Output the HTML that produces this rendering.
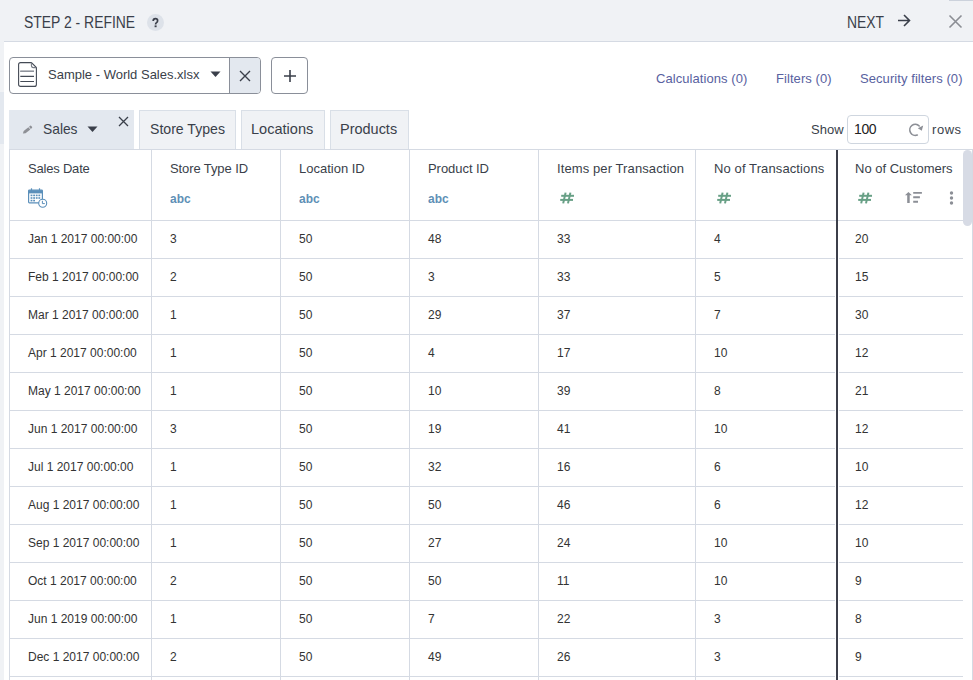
<!DOCTYPE html>
<html><head><meta charset="utf-8">
<style>
*{box-sizing:border-box;margin:0;padding:0}
html,body{width:973px;height:680px;overflow:hidden;background:#f0f2f5;font-family:"Liberation Sans",sans-serif;color:#333}
.abs{position:absolute;white-space:nowrap}
svg.abs{overflow:visible}
#hdr-title{left:24px;top:14px;font-size:16px;color:#3a3f4a;transform:scaleX(0.87);transform-origin:0 0}
#qm{left:147px;top:14px;width:17px;height:17px;border-radius:50%;background:#dde2e9}
#next{left:847px;top:14px;font-size:16px;color:#3a3f4a;transform:scaleX(0.87);transform-origin:0 0}
#panel{left:4px;top:41px;width:969px;height:639px;background:#fff;border-top:1px solid #d5dae3}
#dd{left:9px;top:57px;width:252px;height:37px;border:1px solid #8a8f99;border-radius:4px;overflow:hidden}
#dd .x{position:absolute;left:219px;top:0;width:32px;height:35px;background:#e3e8ef;border-left:1px solid #8a8f99}
#plus{left:271px;top:57px;width:37px;height:37px;border:1px solid #8a8f99;border-radius:4px}
.link{top:71px;font-size:13px;color:#5861a0;letter-spacing:0.07px}
.tab{top:110px;height:39px;background:#f0f2f5;border:1px solid #d9dfe7;border-bottom:none;font-size:15px;color:#3a3f4a;line-height:38px;letter-spacing:-0.3px}
.hd{top:161px;font-size:13px;color:#3a3f4a}
.abc{top:191px;font-size:13px;font-weight:bold;color:#5e90b6;transform:scaleX(0.92);transform-origin:0 0}
.cell{font-size:12px;color:#333;line-height:37px}
</style></head><body>
<div id="hdr-title" class="abs">STEP 2 - REFINE</div>
<div id="qm" class="abs"></div>
<svg class="abs" style="left:147px;top:14px" width="17" height="17" viewBox="0 0 17 17"><path d="M6.2 7.1Q6.2 4.7 8.4 4.7Q10.6 4.7 10.6 6.7Q10.6 7.8 9.5 8.6Q8.6 9.2 8.6 10.5" fill="none" stroke="#3a3f4a" stroke-width="1.7"/><rect x="7.6" y="11.4" width="2" height="1.8" fill="#3a3f4a"/></svg>
<div id="next" class="abs">NEXT</div>
<svg class="abs" style="left:897px;top:14px" width="14" height="13" viewBox="0 0 14 13"><path d="M1 6.5H12.5M7 1L12.5 6.5L7 12" fill="none" stroke="#3a3f4a" stroke-width="1.6"/></svg>
<svg class="abs" style="left:948px;top:14px" width="15" height="15" viewBox="0 0 15 15"><path d="M1.5 1.5L13.5 13.5M13.5 1.5L1.5 13.5" fill="none" stroke="#8b8e94" stroke-width="1.6"/></svg>
<div class="abs" style="left:949px;top:0;width:24px;height:1px;background:#ccd2dc"></div>
<div id="panel" class="abs"></div>
<div class="abs" style="left:0;top:92px;width:4px;height:52px;background:#e3e8ef"></div>
<div id="dd" class="abs"><div class="x"></div></div>
<svg class="abs" style="left:18px;top:62px" width="19" height="25" viewBox="0 0 19 25"><g fill="none" stroke="#444a55" stroke-width="1.1"><path d="M0.6 2.6Q0.6 0.6 2.6 0.6H13.4L18.4 5.6V22.4Q18.4 24.4 16.4 24.4H2.6Q0.6 24.4 0.6 22.4Z"/><path d="M13.4 0.6V3.6Q13.4 5.6 15.4 5.6H18.4" stroke="#777c86"/><path d="M2.3 9.2H16M2.3 14.4H16M2.3 19.5H16"/></g><path d="M2.3 9.2H16" stroke="#9a9ea6" stroke-width="1.1"/></svg>
<div class="abs" style="left:48px;top:67px;font-size:13px;color:#3a3f4a;letter-spacing:0px">Sample - World Sales.xlsx</div>
<svg class="abs" style="left:210px;top:71px" width="11" height="7" viewBox="0 0 11 7"><path d="M0.5 0.5H10.5L5.5 6Z" fill="#3a3f4a"/></svg>
<svg class="abs" style="left:239px;top:70px" width="12" height="12" viewBox="0 0 12 12"><path d="M1 1L11 11M11 1L1 11" fill="none" stroke="#3a3f4a" stroke-width="1.4"/></svg>
<div id="plus" class="abs"></div>
<svg class="abs" style="left:283px;top:69px" width="14" height="14" viewBox="0 0 14 14"><path d="M7 1V13M1 7H13" fill="none" stroke="#3a3f4a" stroke-width="1.6"/></svg>
<div class="abs link" style="left:656px">Calculations (0)</div>
<div class="abs link" style="left:776px">Filters (0)</div>
<div class="abs link" style="left:860px">Security filters (0)</div>
<div class="abs tab" style="left:9px;width:125px;background:#e3e8ef;border-color:#e3e8ef"></div>
<svg class="abs" style="left:22px;top:124px" width="11" height="11" viewBox="0 0 11 11"><path d="M0.9 9.6L1.68 6.96L6.43 3.14L8.31 5.48L3.56 9.30Z" fill="#8e9096"/><path d="M6.98 2.71L8.23 1.70Q8.8 1.3 9.3 1.9L10.11 3.0Q10.4 3.6 9.9 4.1L8.86 5.05Z" fill="#8e9096"/></svg>
<div class="abs tab" style="left:43px;top:110px;border:none;background:none;letter-spacing:0;transform:scaleX(0.92);transform-origin:0 0">Sales</div>
<svg class="abs" style="left:87px;top:126px" width="11" height="7" viewBox="0 0 11 7"><path d="M0.5 0.5H10.5L5.5 6Z" fill="#3a3f4a"/></svg>
<svg class="abs" style="left:118px;top:116px" width="11" height="11" viewBox="0 0 11 11"><path d="M1 1L10 10M10 1L1 10" fill="none" stroke="#3a3f4a" stroke-width="1.3"/></svg>
<div class="abs tab" style="left:139px;width:97px"></div><div class="abs tab" style="left:150px;top:110px;border:none;background:none;letter-spacing:0;transform:scaleX(0.94);transform-origin:0 0">Store Types</div>
<div class="abs tab" style="left:241px;width:84px"></div><div class="abs tab" style="left:251px;top:110px;border:none;background:none;letter-spacing:0;transform:scaleX(0.97);transform-origin:0 0">Locations</div>
<div class="abs tab" style="left:330px;width:79px"></div><div class="abs tab" style="left:340px;top:110px;border:none;background:none;letter-spacing:0;transform:scaleX(0.965);transform-origin:0 0">Products</div>
<div class="abs" style="left:811px;top:122px;font-size:13px;color:#3a3f4a">Show</div>
<div class="abs" style="left:847px;top:115px;width:82px;height:29px;border:1px solid #cfd6df;border-radius:4px"></div>
<div class="abs" style="left:854px;top:121px;font-size:14px;color:#222;letter-spacing:-0.4px">100</div>
<svg class="abs" style="left:908px;top:123px" width="16" height="15" viewBox="0 0 16 15"><path d="M9.3 12A5.5 5.5 0 1 1 11.2 3" fill="none" stroke="#8c8f96" stroke-width="1.6" stroke-linecap="round"/><path d="M15.2 2.6L13.8 7.8L9.8 5.2Z" fill="#8c8f96"/></svg>
<div class="abs" style="left:932px;top:122px;font-size:13px;color:#3a3f4a;letter-spacing:0.55px">rows</div>
<div class="abs" style="left:9px;top:149px;width:964px;height:1px;background:#d5dae3"></div>
<div class="abs" style="left:972px;top:149px;width:1px;height:531px;background:#d5dae3"></div>
<div class="abs" style="left:9px;top:150px;width:1px;height:530px;background:#d5dae3"></div>
<div class="abs" style="left:151px;top:150px;width:1px;height:530px;background:#d5dae3"></div>
<div class="abs" style="left:280px;top:150px;width:1px;height:530px;background:#d5dae3"></div>
<div class="abs" style="left:409px;top:150px;width:1px;height:530px;background:#d5dae3"></div>
<div class="abs" style="left:538px;top:150px;width:1px;height:530px;background:#d5dae3"></div>
<div class="abs" style="left:695px;top:150px;width:1px;height:530px;background:#d5dae3"></div>
<div class="abs" style="left:9px;top:220px;width:954px;height:1px;background:#d5dae3"></div>
<div class="abs" style="left:9px;top:258px;width:954px;height:1px;background:#d5dae3"></div>
<div class="abs" style="left:9px;top:296px;width:954px;height:1px;background:#d5dae3"></div>
<div class="abs" style="left:9px;top:334px;width:954px;height:1px;background:#d5dae3"></div>
<div class="abs" style="left:9px;top:372px;width:954px;height:1px;background:#d5dae3"></div>
<div class="abs" style="left:9px;top:410px;width:954px;height:1px;background:#d5dae3"></div>
<div class="abs" style="left:9px;top:448px;width:954px;height:1px;background:#d5dae3"></div>
<div class="abs" style="left:9px;top:486px;width:954px;height:1px;background:#d5dae3"></div>
<div class="abs" style="left:9px;top:524px;width:954px;height:1px;background:#d5dae3"></div>
<div class="abs" style="left:9px;top:562px;width:954px;height:1px;background:#d5dae3"></div>
<div class="abs" style="left:9px;top:600px;width:954px;height:1px;background:#d5dae3"></div>
<div class="abs" style="left:9px;top:638px;width:954px;height:1px;background:#d5dae3"></div>
<div class="abs" style="left:9px;top:676px;width:954px;height:1px;background:#d5dae3"></div>
<div class="abs" style="left:835px;top:221px;width:1px;height:459px;background:#fff"></div>
<div class="abs" style="left:838px;top:221px;width:1px;height:459px;background:#fff"></div>
<div class="abs" style="left:836px;top:150px;width:2px;height:530px;background:#3c3f4a"></div>
<div class="abs hd" style="left:28px;letter-spacing:-0.2px">Sales Date</div>
<svg class="abs" style="left:28px;top:188px" width="20" height="20" viewBox="0 0 20 20"><g fill="none" stroke="#5b8fba" stroke-width="1.2"><rect x="0.6" y="2.2" width="13.8" height="12.6" rx="0.8"/><line x1="3.5" y1="0.3" x2="3.5" y2="3.5"/><line x1="11.5" y1="0.3" x2="11.5" y2="3.5"/></g><rect x="0.6" y="2.2" width="13.8" height="3.2" fill="#5b8fba"/><g fill="#5b8fba"><rect x="2.6" y="6.6" width="1.8" height="1.6"/><rect x="5.2" y="6.6" width="1.8" height="1.6"/><rect x="7.8" y="6.6" width="1.8" height="1.6"/><rect x="10.4" y="6.6" width="1.8" height="1.6"/><rect x="2.6" y="9.2" width="1.8" height="1.6"/><rect x="5.2" y="9.2" width="1.8" height="1.6"/><rect x="7.8" y="9.2" width="1.8" height="1.6"/><rect x="10.4" y="9.2" width="1.8" height="1.6"/><rect x="2.6" y="11.8" width="1.8" height="1.6"/><rect x="5.2" y="11.8" width="1.8" height="1.6"/></g><circle cx="14.7" cy="15.3" r="4" fill="#fff" stroke="#5b8fba" stroke-width="1.1"/><path d="M14.4 12.8V15.6H16.8" fill="none" stroke="#5b8fba" stroke-width="1"/></svg>
<div class="abs hd" style="left:170px;letter-spacing:-0.1px">Store Type ID</div>
<div class="abs abc" style="left:170px">abc</div>
<div class="abs hd" style="left:299px;letter-spacing:0px">Location ID</div>
<div class="abs abc" style="left:299px">abc</div>
<div class="abs hd" style="left:428px;letter-spacing:-0.05px">Product ID</div>
<div class="abs abc" style="left:428px">abc</div>
<div class="abs hd" style="left:557px;letter-spacing:0.1px">Items per Transaction</div>
<svg class="abs" style="left:560px;top:192px" width="14" height="12" viewBox="0 0 14 12"><g stroke="#68a086" stroke-width="2" fill="none"><line x1="5.6" y1="0.6" x2="3.2" y2="11.4"/><line x1="10.4" y1="0.6" x2="8.0" y2="11.4"/><line x1="1.2" y1="3.8" x2="14" y2="3.8"/><line x1="0.2" y1="7.9" x2="13" y2="7.9"/></g></svg>
<div class="abs hd" style="left:714px;letter-spacing:0.11px">No of Transactions</div>
<svg class="abs" style="left:717px;top:192px" width="14" height="12" viewBox="0 0 14 12"><g stroke="#68a086" stroke-width="2" fill="none"><line x1="5.6" y1="0.6" x2="3.2" y2="11.4"/><line x1="10.4" y1="0.6" x2="8.0" y2="11.4"/><line x1="1.2" y1="3.8" x2="14" y2="3.8"/><line x1="0.2" y1="7.9" x2="13" y2="7.9"/></g></svg>
<div class="abs hd" style="left:855px;letter-spacing:0px">No of Customers</div>
<svg class="abs" style="left:858px;top:192px" width="14" height="12" viewBox="0 0 14 12"><g stroke="#68a086" stroke-width="2" fill="none"><line x1="5.6" y1="0.6" x2="3.2" y2="11.4"/><line x1="10.4" y1="0.6" x2="8.0" y2="11.4"/><line x1="1.2" y1="3.8" x2="14" y2="3.8"/><line x1="0.2" y1="7.9" x2="13" y2="7.9"/></g></svg>
<div class="abs cell" style="left:28px;top:221px">Jan 1 2017 00:00:00</div>
<div class="abs cell" style="left:170px;top:221px">3</div>
<div class="abs cell" style="left:299px;top:221px">50</div>
<div class="abs cell" style="left:428px;top:221px">48</div>
<div class="abs cell" style="left:557px;top:221px">33</div>
<div class="abs cell" style="left:714px;top:221px">4</div>
<div class="abs cell" style="left:855px;top:221px">20</div>
<div class="abs cell" style="left:28px;top:259px">Feb 1 2017 00:00:00</div>
<div class="abs cell" style="left:170px;top:259px">2</div>
<div class="abs cell" style="left:299px;top:259px">50</div>
<div class="abs cell" style="left:428px;top:259px">3</div>
<div class="abs cell" style="left:557px;top:259px">33</div>
<div class="abs cell" style="left:714px;top:259px">5</div>
<div class="abs cell" style="left:855px;top:259px">15</div>
<div class="abs cell" style="left:28px;top:297px">Mar 1 2017 00:00:00</div>
<div class="abs cell" style="left:170px;top:297px">1</div>
<div class="abs cell" style="left:299px;top:297px">50</div>
<div class="abs cell" style="left:428px;top:297px">29</div>
<div class="abs cell" style="left:557px;top:297px">37</div>
<div class="abs cell" style="left:714px;top:297px">7</div>
<div class="abs cell" style="left:855px;top:297px">30</div>
<div class="abs cell" style="left:28px;top:335px">Apr 1 2017 00:00:00</div>
<div class="abs cell" style="left:170px;top:335px">1</div>
<div class="abs cell" style="left:299px;top:335px">50</div>
<div class="abs cell" style="left:428px;top:335px">4</div>
<div class="abs cell" style="left:557px;top:335px">17</div>
<div class="abs cell" style="left:714px;top:335px">10</div>
<div class="abs cell" style="left:855px;top:335px">12</div>
<div class="abs cell" style="left:28px;top:373px">May 1 2017 00:00:00</div>
<div class="abs cell" style="left:170px;top:373px">1</div>
<div class="abs cell" style="left:299px;top:373px">50</div>
<div class="abs cell" style="left:428px;top:373px">10</div>
<div class="abs cell" style="left:557px;top:373px">39</div>
<div class="abs cell" style="left:714px;top:373px">8</div>
<div class="abs cell" style="left:855px;top:373px">21</div>
<div class="abs cell" style="left:28px;top:411px">Jun 1 2017 00:00:00</div>
<div class="abs cell" style="left:170px;top:411px">3</div>
<div class="abs cell" style="left:299px;top:411px">50</div>
<div class="abs cell" style="left:428px;top:411px">19</div>
<div class="abs cell" style="left:557px;top:411px">41</div>
<div class="abs cell" style="left:714px;top:411px">10</div>
<div class="abs cell" style="left:855px;top:411px">12</div>
<div class="abs cell" style="left:28px;top:449px">Jul 1 2017 00:00:00</div>
<div class="abs cell" style="left:170px;top:449px">1</div>
<div class="abs cell" style="left:299px;top:449px">50</div>
<div class="abs cell" style="left:428px;top:449px">32</div>
<div class="abs cell" style="left:557px;top:449px">16</div>
<div class="abs cell" style="left:714px;top:449px">6</div>
<div class="abs cell" style="left:855px;top:449px">10</div>
<div class="abs cell" style="left:28px;top:487px">Aug 1 2017 00:00:00</div>
<div class="abs cell" style="left:170px;top:487px">1</div>
<div class="abs cell" style="left:299px;top:487px">50</div>
<div class="abs cell" style="left:428px;top:487px">50</div>
<div class="abs cell" style="left:557px;top:487px">46</div>
<div class="abs cell" style="left:714px;top:487px">6</div>
<div class="abs cell" style="left:855px;top:487px">12</div>
<div class="abs cell" style="left:28px;top:525px">Sep 1 2017 00:00:00</div>
<div class="abs cell" style="left:170px;top:525px">1</div>
<div class="abs cell" style="left:299px;top:525px">50</div>
<div class="abs cell" style="left:428px;top:525px">27</div>
<div class="abs cell" style="left:557px;top:525px">24</div>
<div class="abs cell" style="left:714px;top:525px">10</div>
<div class="abs cell" style="left:855px;top:525px">10</div>
<div class="abs cell" style="left:28px;top:563px">Oct 1 2017 00:00:00</div>
<div class="abs cell" style="left:170px;top:563px">2</div>
<div class="abs cell" style="left:299px;top:563px">50</div>
<div class="abs cell" style="left:428px;top:563px">50</div>
<div class="abs cell" style="left:557px;top:563px">11</div>
<div class="abs cell" style="left:714px;top:563px">10</div>
<div class="abs cell" style="left:855px;top:563px">9</div>
<div class="abs cell" style="left:28px;top:601px">Jun 1 2019 00:00:00</div>
<div class="abs cell" style="left:170px;top:601px">1</div>
<div class="abs cell" style="left:299px;top:601px">50</div>
<div class="abs cell" style="left:428px;top:601px">7</div>
<div class="abs cell" style="left:557px;top:601px">22</div>
<div class="abs cell" style="left:714px;top:601px">3</div>
<div class="abs cell" style="left:855px;top:601px">8</div>
<div class="abs cell" style="left:28px;top:639px">Dec 1 2017 00:00:00</div>
<div class="abs cell" style="left:170px;top:639px">2</div>
<div class="abs cell" style="left:299px;top:639px">50</div>
<div class="abs cell" style="left:428px;top:639px">49</div>
<div class="abs cell" style="left:557px;top:639px">26</div>
<div class="abs cell" style="left:714px;top:639px">3</div>
<div class="abs cell" style="left:855px;top:639px">9</div>
<svg class="abs" style="left:904px;top:191px" width="19" height="13" viewBox="0 0 19 13"><path d="M4.45 12V3" stroke="#8c8f96" stroke-width="2.5"/><path d="M1 4.3L4.45 0.9L7.9 4.3Z" fill="#8c8f96"/><path d="M9.2 1.9H17.9M9.2 6.3H15.9M9.2 10.8H14" stroke="#8c8f96" stroke-width="1.9"/></svg>
<svg class="abs" style="left:949px;top:191px" width="5" height="15" viewBox="0 0 5 15"><circle cx="2.5" cy="2" r="1.7" fill="#8c8f96"/><circle cx="2.5" cy="7" r="1.7" fill="#8c8f96"/><circle cx="2.5" cy="12" r="1.7" fill="#8c8f96"/></svg>
<div class="abs" style="left:963px;top:150px;width:9px;height:76px;border-radius:4.5px;background:#d7dbe5"></div>
</body></html>
